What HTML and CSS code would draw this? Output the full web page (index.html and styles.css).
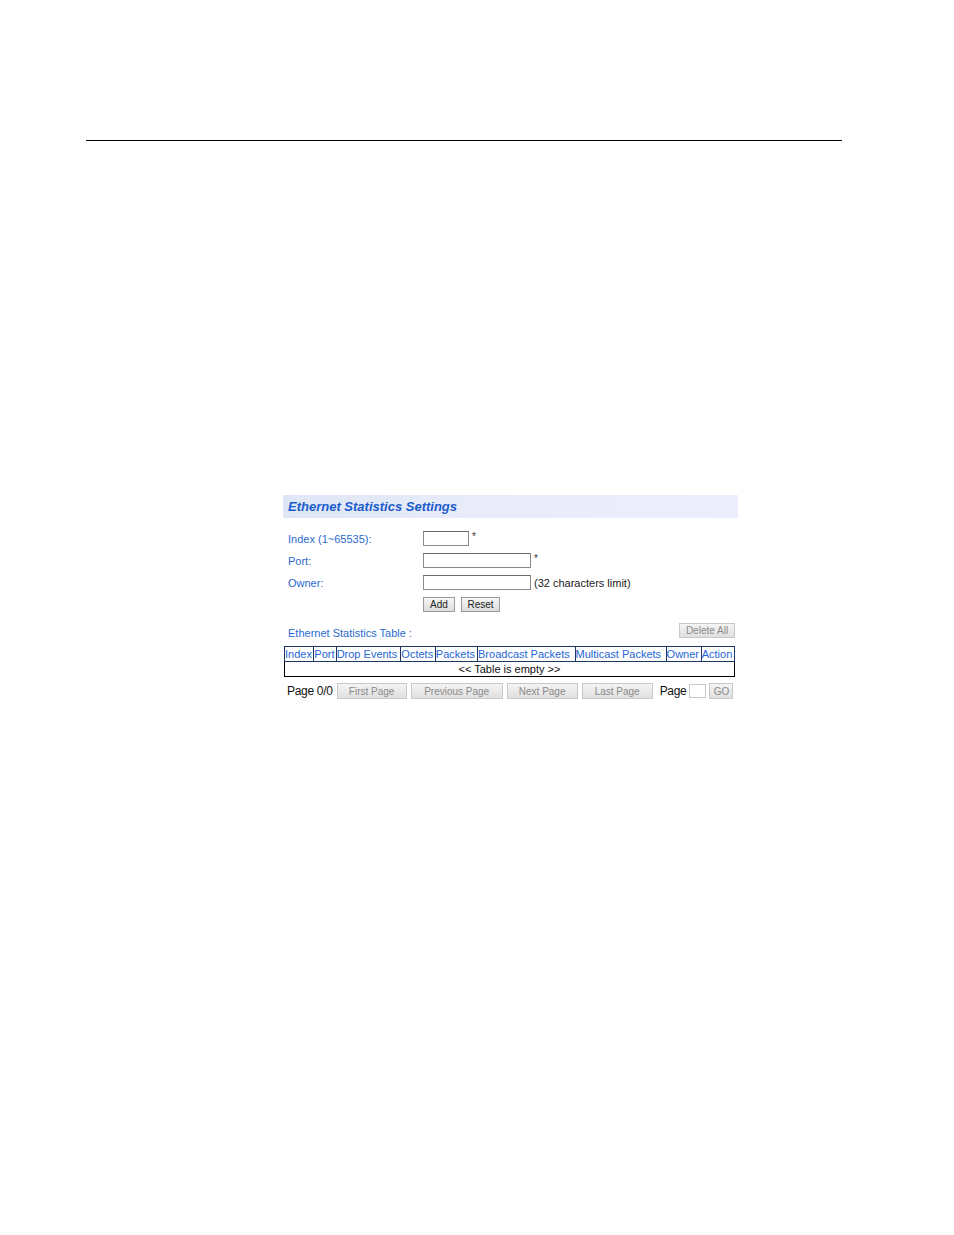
FILE: index.html
```html
<!DOCTYPE html>
<html>
<head>
<meta charset="utf-8">
<link rel="stylesheet" href="styles.css">
</head>
<body>
<div class="page">
  <div class="rule"></div>
  <div class="panel">
    <div class="title-bar"><span class="title">Ethernet Statistics Settings</span></div>
    <div class="form">
      <div class="row">
        <span class="label">Index (1~65535):</span>
        <input class="inp short" type="text">
        <span class="star">*</span>
      </div>
      <div class="row">
        <span class="label">Port:</span>
        <input class="inp long" type="text">
        <span class="star">*</span>
      </div>
      <div class="row">
        <span class="label">Owner:</span>
        <input class="inp long" type="text">
        <span class="note">(32 characters limit)</span>
      </div>
      <div class="row btnrow">
        <span class="label"></span>
        <button class="btn">Add</button>
        <button class="btn">Reset</button>
      </div>
    </div>
    <div class="table-head">
      <span class="label tlabel">Ethernet Statistics Table :</span>
      <button class="btn dis">Delete All</button>
    </div>
    <table class="stats">
      <tr class="hdr">
        <th>Index</th><th>Port</th><th>Drop Events</th><th>Octets</th><th>Packets</th><th>Broadcast Packets</th><th>Multicast Packets</th><th>Owner</th><th>Action</th>
      </tr>
      <tr class="empty"><td colspan="9">&lt;&lt; Table is empty &gt;&gt;</td></tr>
    </table>
    <div class="pager">
      <span class="pg">Page 0/0</span>
      <button class="btn dis first">First Page</button>
      <button class="btn dis prev">Previous Page</button>
      <button class="btn dis next">Next Page</button>
      <button class="btn dis last">Last Page</button>
      <span class="pg pgl">Page</span>
      <input class="inp pginp" type="text">
      <button class="btn dis go">GO</button>
    </div>
  </div>
</div>
</body>
</html>
```

FILE: styles.css
```css
html, body {
  margin: 0;
  padding: 0;
  background: #ffffff;
}
body {
  font-family: "Liberation Sans", Arial, sans-serif;
  width: 954px;
  height: 1235px;
}
.page {
  padding-top: 140px;
}
.rule {
  margin-left: 86px;
  width: 756px;
  height: 1px;
  background: #000;
}
.panel {
  margin-left: 283px;
  margin-top: 354px;
  width: 455px;
}
.title-bar {
  height: 23px;
  background: linear-gradient(to right, #dfe6f6 0%, #e8ecf8 40%, #eceefb 100%);
  display: flex;
  align-items: center;
  padding-left: 5px;
}
.title {
  font-weight: bold;
  font-style: italic;
  font-size: 13px;
  color: #1b5ccc;
}
.form {
  padding-top: 13px;
  padding-left: 5px;
}
.row {
  display: flex;
  align-items: center;
  height: 15px;
  margin-bottom: 7px;
}
.label {
  width: 135px;
  font-size: 11px;
  color: #2a6ad0;
}
.inp {
  box-sizing: border-box;
  height: 15px;
  border: 1px solid #8a8a8a;
  border-top-color: #6a6a6a;
  background: #fff;
  padding: 0;
  margin: 0;
}
.short { width: 46px; }
.long { width: 108px; }
.star {
  font-size: 10px;
  color: #333;
  margin-left: 3px;
  align-self: flex-start;
}
.note {
  font-size: 11px;
  color: #222;
  margin-left: 3px;
}
.btnrow { margin-top: 2px; }
.btn {
  box-sizing: border-box;
  height: 15px;
  padding: 0 6px;
  margin: 0;
  font-family: "Liberation Sans", Arial, sans-serif;
  font-size: 10px;
  color: #222;
  border: 1px solid #9a9a9a;
  background: linear-gradient(#f6f6f6, #dcdcdc);
  line-height: 13px;
  white-space: nowrap;
  flex-shrink: 0;
}
.btnrow .btn + .btn { margin-left: 6px; }
.btnrow .btn:first-of-type { width: 32px; padding: 0; }
.btnrow .btn:last-of-type { width: 39px; padding: 0; }
.btn.dis {
  color: #8a8a8a;
  border: 1px solid #c8c8c8;
  background: linear-gradient(#f4f4f4, #e0e0e0);
}
.table-head {
  display: flex;
  justify-content: space-between;
  align-items: flex-start;
  padding-left: 5px;
  margin-top: 11px;
  padding-right: 3px;
  height: 17px;
}
.tlabel {
  width: auto;
  padding-top: 4px;
}
.table-head .btn { width: 56px; padding: 0; }
.stats {
  margin-top: 6px;
  margin-left: 1px;
  width: 451px;
  border-collapse: collapse;
  border: 1px solid #000;
  font-size: 11px;
}
.stats th {
  font-weight: normal;
  color: #1f66d6;
  border: 1px solid #1b3566;
  padding: 0;
  height: 14px;
  line-height: 12px;
  white-space: nowrap;
  text-align: left;
}
.stats td {
  text-align: center;
  color: #111;
  height: 14px;
  line-height: 12px;
  padding: 0;
  border: 1px solid #000;
}
.pager {
  display: flex;
  align-items: center;
  margin-top: 6px;
  padding-left: 4px;
  white-space: nowrap;
}
.pg {
  font-size: 12px;
  color: #111;
  flex-shrink: 0;
  letter-spacing: -0.3px;
}
.pager .btn { height: 16px; padding: 0; }
.first { width: 70px; margin-left: 4px; }
.prev { width: 92px; margin-left: 4px; }
.next { width: 71px; margin-left: 4px; }
.last { width: 71px; margin-left: 4px; }
.pgl { margin-left: 7px; }
.pginp { width: 17px; height: 14px; margin-left: 3px; border-color: #c8c8c8; flex-shrink: 0; }
.go { width: 24px; margin-left: 3px; }
```
